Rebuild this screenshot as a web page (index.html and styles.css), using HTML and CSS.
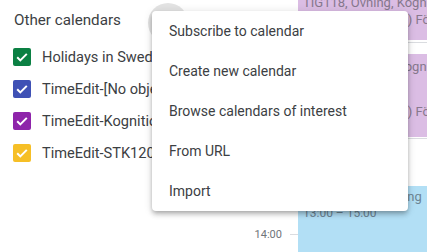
FILE: index.html
```html
<!DOCTYPE html>
<html lang="en">
<head>
    <meta charset="UTF-8">
    <meta name="viewport" content="width=device-width, initial-scale=1.0">
    <title>Other calendars</title>
    <link rel="stylesheet" href="styles.css">
</head>
<body>
    <div class="app">
        <div class="sidebar">
            <div class="side-header">
                <span class="side-title">Other calendars</span>
                <span class="add-button"></span>
            </div>

            <div class="cal-row">
                <span class="check green">
                    <svg width="18" height="18" viewBox="0 0 18 18"><path d="M4.2 9.3l3.1 3.1 6.5-6.5" fill="none" stroke="#fff" stroke-width="2"/></svg>
                </span>
                <span class="cal-name">Holidays in Sweden</span>
            </div>
            <div class="cal-row">
                <span class="check blue">
                    <svg width="18" height="18" viewBox="0 0 18 18"><path d="M4.2 9.3l3.1 3.1 6.5-6.5" fill="none" stroke="#fff" stroke-width="2"/></svg>
                </span>
                <span class="cal-name">TimeEdit-[No objects]</span>
            </div>
            <div class="cal-row">
                <span class="check purple">
                    <svg width="18" height="18" viewBox="0 0 18 18"><path d="M4.2 9.3l3.1 3.1 6.5-6.5" fill="none" stroke="#fff" stroke-width="2"/></svg>
                </span>
                <span class="cal-name">TimeEdit-Kognitionsvetenskap</span>
            </div>
            <div class="cal-row">
                <span class="check yellow">
                    <svg width="18" height="18" viewBox="0 0 18 18"><path d="M4.2 9.3l3.1 3.1 6.5-6.5" fill="none" stroke="#fff" stroke-width="2"/></svg>
                </span>
                <span class="cal-name">TimeEdit-STK120, Statistik</span>
            </div>
        </div>

        <div class="gutter">
            <div class="hour-row">
                <span class="hour-label">14:00</span>
                <span class="hour-tick"></span>
            </div>
        </div>

        <div class="day">
            <div class="event purple-ev ev-one">
                <div class="ev-text">
                    <div>TIG118, Övning, Kognitionsvetenskap</div>
                    <div>Kognitivt (GR1207) Föreläsning</div>
                </div>
            </div>
            <div class="event purple-ev ev-two">
                <div class="ev-text">
                    <div>TIG118, Övning, Kognitionsvetenskap</div>
                    <div>10:15 – 12:00</div>
                    <div>Lokal</div>
                    <div>Kognitivt (GR1203) Föreläsning</div>
                </div>
            </div>
            <div class="event blue-ev ev-three">
                <div class="ev-text">
                    <div>STK120, Föreläsning</div>
                    <div class="ev-time">13:00 – 15:00</div>
                </div>
            </div>
        </div>
    </div>

    <div class="menu">
        <div class="menu-item">Subscribe to calendar</div>
        <div class="menu-item">Create new calendar</div>
        <div class="menu-item">Browse calendars of interest</div>
        <div class="menu-item">From URL</div>
        <div class="menu-item">Import</div>
    </div>
</body>
</html>
```

FILE: styles.css
```css
body {
    margin: 0;
    padding: 0;
    background-color: #ffffff;
    font-family: Roboto, "Liberation Sans", Arial, sans-serif;
    color: #3c4043;
    width: 427px;
    height: 252px;
    overflow: hidden;
    position: relative;
}

.app {
    display: flex;
    height: 252px;
}

.sidebar {
    width: 250px;
    flex-shrink: 0;
    overflow: hidden;
}

.side-header {
    display: flex;
    align-items: flex-start;
    justify-content: space-between;
    width: 174px;
    height: 41px;
    padding-left: 14px;
}

.side-title {
    font-size: 15.2px;
    line-height: 20px;
    margin-top: 10px;
    color: #3c4043;
}

.add-button {
    width: 40px;
    height: 40px;
    margin-top: 3px;
    border-radius: 50%;
    background-color: #e3e3e3;
}

.cal-row {
    display: flex;
    align-items: center;
    gap: 11px;
    height: 32px;
    padding-left: 13px;
    white-space: nowrap;
}

.check {
    width: 18px;
    height: 18px;
    border-radius: 2px;
    flex-shrink: 0;
    display: block;
}

.check svg {
    display: block;
}

.green { background-color: #0b8043; }
.blue { background-color: #3f51b5; }
.purple { background-color: #8e24aa; }
.yellow { background-color: #f6bf26; }

.cal-name {
    font-size: 14.6px;
    color: #3c4043;
}

.gutter {
    width: 48px;
    flex-shrink: 0;
    padding-top: 228px;
}

.hour-row {
    display: flex;
    align-items: center;
    justify-content: flex-end;
    gap: 8px;
    height: 12px;
}

.hour-label {
    font-size: 11px;
    color: #70757a;
}

.hour-tick {
    width: 8px;
    height: 1px;
    background-color: #dadce0;
}

.day {
    flex: 1;
    overflow: hidden;
    background-image: linear-gradient(to bottom, #dadce0 1px, transparent 1px);
    background-size: 100% 48px;
    background-position: 0 42px;
}

.event {
    overflow: hidden;
    white-space: nowrap;
    font-size: 13px;
    line-height: 17px;
    padding-left: 5px;
}

.ev-text {
    margin-top: -6px;
}

.purple-ev {
    background-color: #dbbde4;
    color: #86788d;
}

.blue-ev {
    background-color: #b2dff5;
    color: #6d8594;
}

.ev-one {
    height: 40px;
}

.ev-two {
    height: 83px;
    margin-top: 14px;
    line-height: 15px;
}

.ev-two .ev-text {
    margin-top: 5px;
}

.ev-three {
    height: 70px;
    margin-top: 49px;
    line-height: 16px;
}

.ev-three .ev-text {
    margin-top: 3px;
}

.ev-time {
    font-size: 12px;
}

.menu {
    position: absolute;
    top: 11px;
    left: 152px;
    width: 256px;
    background-color: #ffffff;
    border-radius: 4px;
    box-shadow: 0 4px 5px 0 rgba(0, 0, 0, 0.14), 0 1px 10px 0 rgba(0, 0, 0, 0.12), 0 2px 4px -1px rgba(0, 0, 0, 0.2);
}

.menu-item {
    height: 40px;
    line-height: 40px;
    padding-left: 17px;
    font-size: 14px;
    color: #3c4043;
}
```
